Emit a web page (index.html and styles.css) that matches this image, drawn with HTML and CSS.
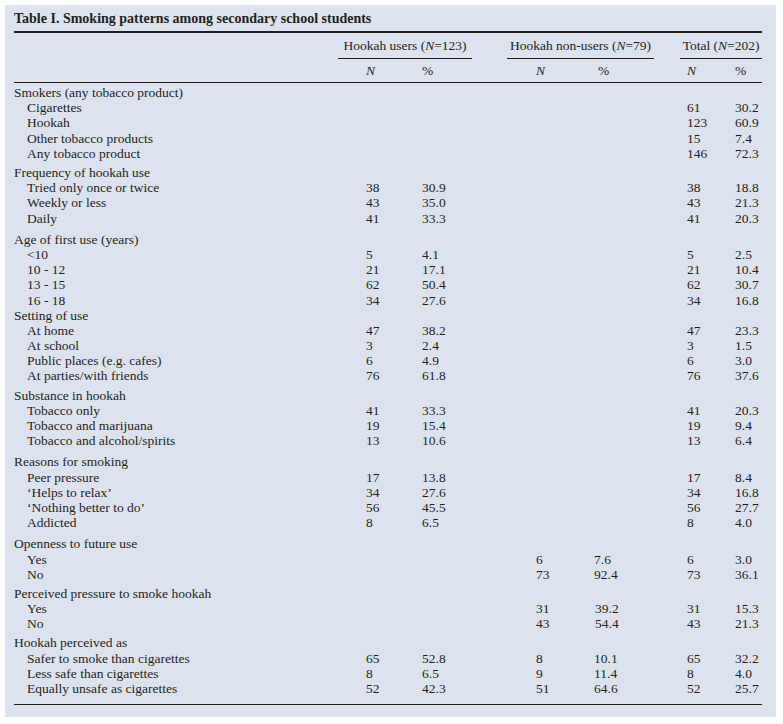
FILE: index.html
```html
<!DOCTYPE html>
<html lang="en">
<head>
<meta charset="utf-8">
<title>Table I. Smoking patterns among secondary school students</title>
<link rel="stylesheet" href="styles.css">
</head>
<body>
<div class="panel">
  <div class="caption">Table I. Smoking patterns among secondary school students</div>
  <table class="data">
    <colgroup>
      <col class="c-label">
      <col class="c-un">
      <col class="c-up">
      <col class="c-gap1">
      <col class="c-nn">
      <col class="c-np">
      <col class="c-gap2">
      <col class="c-tn">
      <col class="c-tp">
    </colgroup>
    <thead>
      <tr class="h1">
        <th></th>
        <th colspan="2" class="grp">Hookah users (<i>N</i>=123)</th>
        <th></th>
        <th colspan="2" class="grp">Hookah non-users (<i>N</i>=79)</th>
        <th></th>
        <th colspan="2" class="grp">Total (<i>N</i>=202)</th>
      </tr>
      <tr class="h2">
        <th></th>
        <th class="n"><i>N</i></th><th class="p">%</th>
        <th></th>
        <th class="n nn"><i>N</i></th><th class="p np">%</th>
        <th></th>
        <th class="n tn"><i>N</i></th><th class="p">%</th>
      </tr>
    </thead>
    <tbody>
      <tr class="g first"><td>Smokers (any tobacco product)</td><td></td><td></td><td></td><td></td><td></td><td></td><td></td><td></td></tr>
      <tr><td class="sub">Cigarettes</td><td></td><td></td><td></td><td></td><td></td><td></td><td class="tn">61</td><td>30.2</td></tr>
      <tr><td class="sub">Hookah</td><td></td><td></td><td></td><td></td><td></td><td></td><td class="tn">123</td><td>60.9</td></tr>
      <tr><td class="sub">Other tobacco products</td><td></td><td></td><td></td><td></td><td></td><td></td><td class="tn">15</td><td>7.4</td></tr>
      <tr><td class="sub">Any tobacco product</td><td></td><td></td><td></td><td></td><td></td><td></td><td class="tn">146</td><td>72.3</td></tr>

      <tr class="g gap4"><td>Frequency of hookah use</td><td></td><td></td><td></td><td></td><td></td><td></td><td></td><td></td></tr>
      <tr><td class="sub">Tried only once or twice</td><td class="un">38</td><td>30.9</td><td></td><td></td><td></td><td></td><td class="tn">38</td><td>18.8</td></tr>
      <tr><td class="sub">Weekly or less</td><td class="un">43</td><td>35.0</td><td></td><td></td><td></td><td></td><td class="tn">43</td><td>21.3</td></tr>
      <tr><td class="sub">Daily</td><td class="un">41</td><td>33.3</td><td></td><td></td><td></td><td></td><td class="tn">41</td><td>20.3</td></tr>

      <tr class="g gap6"><td>Age of first use (years)</td><td></td><td></td><td></td><td></td><td></td><td></td><td></td><td></td></tr>
      <tr><td class="sub">&lt;10</td><td class="un">5</td><td>4.1</td><td></td><td></td><td></td><td></td><td class="tn">5</td><td>2.5</td></tr>
      <tr><td class="sub">10 - 12</td><td class="un">21</td><td>17.1</td><td></td><td></td><td></td><td></td><td class="tn">21</td><td>10.4</td></tr>
      <tr><td class="sub">13 - 15</td><td class="un">62</td><td>50.4</td><td></td><td></td><td></td><td></td><td class="tn">62</td><td>30.7</td></tr>
      <tr><td class="sub">16 - 18</td><td class="un">34</td><td>27.6</td><td></td><td></td><td></td><td></td><td class="tn">34</td><td>16.8</td></tr>

      <tr class="g"><td>Setting of use</td><td></td><td></td><td></td><td></td><td></td><td></td><td></td><td></td></tr>
      <tr><td class="sub">At home</td><td class="un">47</td><td>38.2</td><td></td><td></td><td></td><td></td><td class="tn">47</td><td>23.3</td></tr>
      <tr><td class="sub">At school</td><td class="un">3</td><td>2.4</td><td></td><td></td><td></td><td></td><td class="tn">3</td><td>1.5</td></tr>
      <tr><td class="sub">Public places (e.g. cafes)</td><td class="un">6</td><td>4.9</td><td></td><td></td><td></td><td></td><td class="tn">6</td><td>3.0</td></tr>
      <tr><td class="sub">At parties/with friends</td><td class="un">76</td><td>61.8</td><td></td><td></td><td></td><td></td><td class="tn">76</td><td>37.6</td></tr>

      <tr class="g gap4"><td>Substance in hookah</td><td></td><td></td><td></td><td></td><td></td><td></td><td></td><td></td></tr>
      <tr><td class="sub">Tobacco only</td><td class="un">41</td><td>33.3</td><td></td><td></td><td></td><td></td><td class="tn">41</td><td>20.3</td></tr>
      <tr><td class="sub">Tobacco and marijuana</td><td class="un">19</td><td>15.4</td><td></td><td></td><td></td><td></td><td class="tn">19</td><td>9.4</td></tr>
      <tr><td class="sub">Tobacco and alcohol/spirits</td><td class="un">13</td><td>10.6</td><td></td><td></td><td></td><td></td><td class="tn">13</td><td>6.4</td></tr>

      <tr class="g gap6"><td>Reasons for smoking</td><td></td><td></td><td></td><td></td><td></td><td></td><td></td><td></td></tr>
      <tr><td class="sub">Peer pressure</td><td class="un">17</td><td>13.8</td><td></td><td></td><td></td><td></td><td class="tn">17</td><td>8.4</td></tr>
      <tr><td class="sub">‘Helps to relax’</td><td class="un">34</td><td>27.6</td><td></td><td></td><td></td><td></td><td class="tn">34</td><td>16.8</td></tr>
      <tr><td class="sub">‘Nothing better to do’</td><td class="un">56</td><td>45.5</td><td></td><td></td><td></td><td></td><td class="tn">56</td><td>27.7</td></tr>
      <tr><td class="sub">Addicted</td><td class="un">8</td><td>6.5</td><td></td><td></td><td></td><td></td><td class="tn">8</td><td>4.0</td></tr>

      <tr class="g gap6"><td>Openness to future use</td><td></td><td></td><td></td><td></td><td></td><td></td><td></td><td></td></tr>
      <tr><td class="sub">Yes</td><td></td><td></td><td></td><td class="nn">6</td><td>7.6</td><td></td><td class="tn">6</td><td>3.0</td></tr>
      <tr><td class="sub">No</td><td></td><td></td><td></td><td class="nn">73</td><td>92.4</td><td></td><td class="tn">73</td><td>36.1</td></tr>

      <tr class="g gap4"><td>Perceived pressure to smoke hookah</td><td></td><td></td><td></td><td></td><td></td><td></td><td></td><td></td></tr>
      <tr><td class="sub">Yes</td><td></td><td></td><td></td><td class="nn">31</td><td class="shift">39.2</td><td></td><td class="tn">31</td><td>15.3</td></tr>
      <tr><td class="sub">No</td><td></td><td></td><td></td><td class="nn">43</td><td class="shift">54.4</td><td></td><td class="tn">43</td><td>21.3</td></tr>

      <tr class="g gap4"><td>Hookah perceived as</td><td></td><td></td><td></td><td></td><td></td><td></td><td></td><td></td></tr>
      <tr><td class="sub">Safer to smoke than cigarettes</td><td class="un">65</td><td>52.8</td><td></td><td class="nn">8</td><td>10.1</td><td></td><td class="tn">65</td><td>32.2</td></tr>
      <tr><td class="sub">Less safe than cigarettes</td><td class="un">8</td><td>6.5</td><td></td><td class="nn">9</td><td>11.4</td><td></td><td class="tn">8</td><td>4.0</td></tr>
      <tr class="last"><td class="sub">Equally unsafe as cigarettes</td><td class="un">52</td><td>42.3</td><td></td><td class="nn">51</td><td>64.6</td><td></td><td class="tn">52</td><td>25.7</td></tr>
    </tbody>
  </table>
</div>
</body>
</html>
```

FILE: styles.css
```css
html, body {
  margin: 0;
  padding: 0;
  background: #ffffff;
}

body {
  padding: 5px 7px 7px 5px;
  font-family: "Liberation Serif", "Times New Roman", serif;
  color: #231f20;
}

.panel {
  background: #dde3ee;
  padding: 4px 14px 12px 9px;
}

.caption {
  font-weight: bold;
  font-size: 14px;
  line-height: 20px;
  padding-bottom: 2px;
  border-bottom: 2px solid #231f20;
}

.data {
  width: 748px;
  border-collapse: collapse;
  table-layout: fixed;
  font-size: 13.5px;
  border-bottom: 1px solid #231f20;
}

.c-label { width: 324px; }
.c-un { width: 84px; }
.c-up { width: 50px; }
.c-gap1 { width: 35px; }
.c-nn { width: 87px; }
.c-np { width: 60px; }
.c-gap2 { width: 26px; }
.c-tn { width: 55px; }
.c-tp { width: 27px; }

.data th,
.data td {
  padding: 0;
  font-weight: normal;
  text-align: left;
  white-space: nowrap;
  vertical-align: middle;
}

.data .h1 th {
  height: 24px;
  padding-top: 1px;
}

.data .h1 th.grp {
  text-align: center;
  border-bottom: 1px solid #231f20;
}

.data .h2 th {
  height: 23px;
  border-bottom: 1px solid #231f20;
}

.data td {
  height: 15.2px;
  line-height: 15px;
}

.data .un,
.data th.n {
  padding-left: 28px;
}

.data .nn,
.data th.nn {
  padding-left: 29px;
}

.data .tn,
.data th.tn {
  padding-left: 7px;
}

.data th.np {
  padding-left: 4px;
}

.data td.shift {
  padding-left: 1px;
}

.data td.sub {
  padding-left: 13px;
}

.data tr.first td {
  padding-top: 2px;
}

.data tr.gap4 td {
  padding-top: 4px;
}

.data tr.gap6 td {
  padding-top: 6px;
}

.data tr.last td {
  padding-bottom: 8px;
}
```
